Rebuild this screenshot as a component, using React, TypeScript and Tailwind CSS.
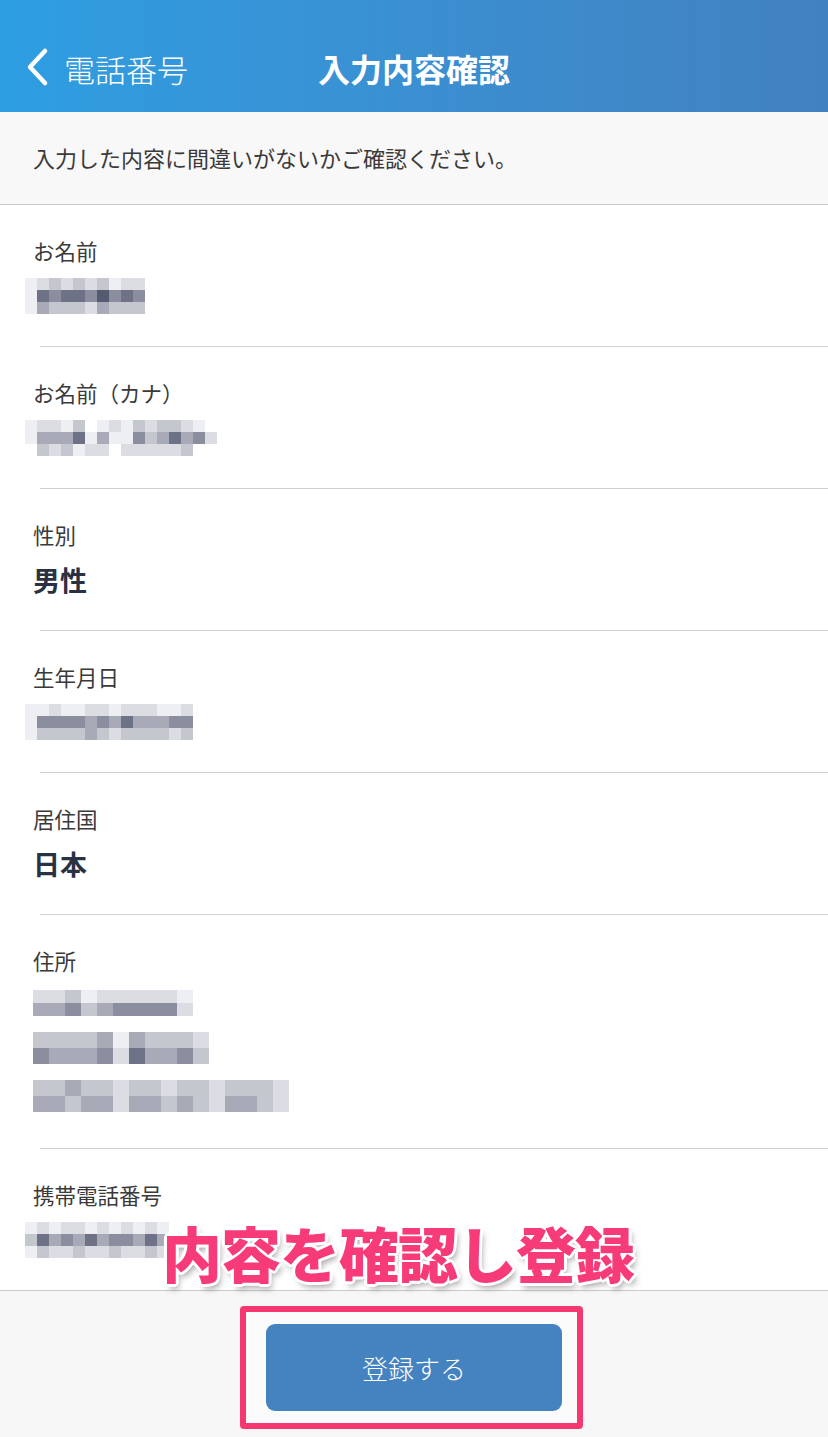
import React from "react";

const shades: Record<string, string> = {
  "0": "bg-transparent",
  "1": "bg-[#eeeff2]",
  "2": "bg-[#dcdde3]",
  "3": "bg-[#c5c7cf]",
  "4": "bg-[#a8abb7]",
  "5": "bg-[#8a8e9e]",
  "6": "bg-[#6d7286]",
  "7": "bg-[#545a70]",
};

// blurred personal data, drawn as a pixel mosaic
function Mosaic({ rows, cell }: { rows: string[]; cell: string }) {
  return (
    <div className="flex flex-col">
      {rows.map((r, i) => (
        <div key={i} className="flex">
          {r.split("").map((c, j) => (
            <div key={j} className={`${cell} ${shades[c]}`} />
          ))}
        </div>
      ))}
    </div>
  );
}

function Divider() {
  return <div className="ml-[40px] h-px bg-[#cfcfd2]" />;
}

function Row({ label, children }: { label: string; children: React.ReactNode }) {
  return (
    <>
      <div className="h-[141px] px-[33px] pt-[32px]">
        <div className="text-[21.5px] leading-[28px] text-[#3a3a3a]">{label}</div>
        <div className="mt-[13px]">{children}</div>
      </div>
      <Divider />
    </>
  );
}

const jp = "font-['Noto_Sans_CJK_JP','Noto_Sans',sans-serif]";

export default function App() {
  return (
    <div className={`relative w-[828px] h-[1437px] overflow-hidden bg-white ${jp}`}>
      {/* Header */}
      <header className="h-[112px] pt-[24px] bg-linear-to-r from-[#2d9ee2] to-[#4281c0] text-white">
        <div className="relative h-[88px] flex items-center">
          <div className="flex items-center pl-[24px]">
            <svg width="28" height="40" viewBox="0 0 28 40" fill="none" className="mt-[-2px]">
              <path d="M21 4L6 20l15 16" stroke="white" strokeWidth="4.5" strokeLinecap="round" strokeLinejoin="round" />
            </svg>
            <span className="ml-[12px] text-[31px] leading-none font-light">電話番号</span>
          </div>
          <div className="absolute inset-x-0 text-center text-[32px] font-bold leading-none pointer-events-none">
            入力内容確認
          </div>
        </div>
      </header>

      {/* Notice */}
      <div className="h-[93px] bg-[#f8f8f9] border-b border-[#cacacd] px-[33px] flex items-center">
        <p className="text-[22px] text-[#3a3a3a] mt-[-2px]">入力した内容に間違いがないかご確認ください。</p>
      </div>

      {/* Fields */}
      <Row label="お名前">
        <div className="-ml-[8px]">
          <Mosaic
            cell="w-[12px] h-[12px]"
            rows={["1232323122", "1656657565", "1433324333"]}
          />
        </div>
      </Row>
      <Row label="お名前（カナ）">
        <div className="-ml-[8px]">
          <Mosaic
            cell="w-[12px] h-[12px]"
            rows={["1221301213233210", "1444614115346452", "0323122022222300"]}
          />
        </div>
      </Row>
      <Row label="性別">
        <div className="text-[27px] leading-[36px] font-bold text-[#2a3142]">男性</div>
      </Row>
      <Row label="生年月日">
        <div className="-ml-[8px]">
          <Mosaic
            cell="w-[12px] h-[12px]"
            rows={["112112212221120", "155554546444550", "133334323333230"]}
          />
        </div>
      </Row>
      <Row label="居住国">
        <div className="text-[27px] leading-[36px] font-bold text-[#2a3142]">日本</div>
      </Row>

      {/* Address */}
      <div className="h-[233px] px-[33px] pt-[32px]">
        <div className="text-[21.5px] leading-[28px] text-[#3a3a3a]">住所</div>
        <div className="mt-[15px] flex flex-col gap-[16px]">
          <Mosaic cell="w-[16px] h-[13px]" rows={["2231222221", "4453455552"]} />
          <Mosaic cell="w-[16px] h-[16px]" rows={["33334143332", "54445264453"]} />
          <Mosaic cell="w-[16px] h-[16px]" rows={["3343323323323332", "4434424434324432"]} />
        </div>
      </div>
      <Divider />

      {/* Phone */}
      <div className="h-[141px] px-[33px] pt-[32px]">
        <div className="text-[21.5px] leading-[28px] text-[#3a3a3a]">携帯電話番号</div>
        <div className="mt-[13px] -ml-[8px]">
          <Mosaic
            cell="w-[12px] h-[12px]"
            rows={["121221212121", "364546455464", "132232232232"]}
          />
        </div>
      </div>

      {/* Footer */}
      <div className="h-[147px] bg-[#f7f7f8] border-t border-[#cacacd] flex pl-[240px] pt-[15px]">
        <div className="w-[343px] h-[123px] border-[6px] border-[#f5386f] rounded-[4px] flex items-center pl-[20px] bg-[#fbfbfc]">
          <button className="w-[296px] h-[87px] rounded-[9px] bg-[#4583c0] text-white text-[26px] font-light">
            登録する
          </button>
        </div>
      </div>

      {/* Annotation overlay */}
      <div className="absolute left-[162px] top-[1214px] text-[60px] leading-[76px] font-black text-[#f73a78] tracking-[-1px] [text-shadow:3px_0_0_#fff,-3px_0_0_#fff,0_3px_0_#fff,0_-3px_0_#fff,2px_2px_0_#fff,-2px_2px_0_#fff,2px_-2px_0_#fff,-2px_-2px_0_#fff,3px_5px_6px_rgba(0,0,0,0.35)]">
        内容を確認し登録
      </div>
    </div>
  );
}
